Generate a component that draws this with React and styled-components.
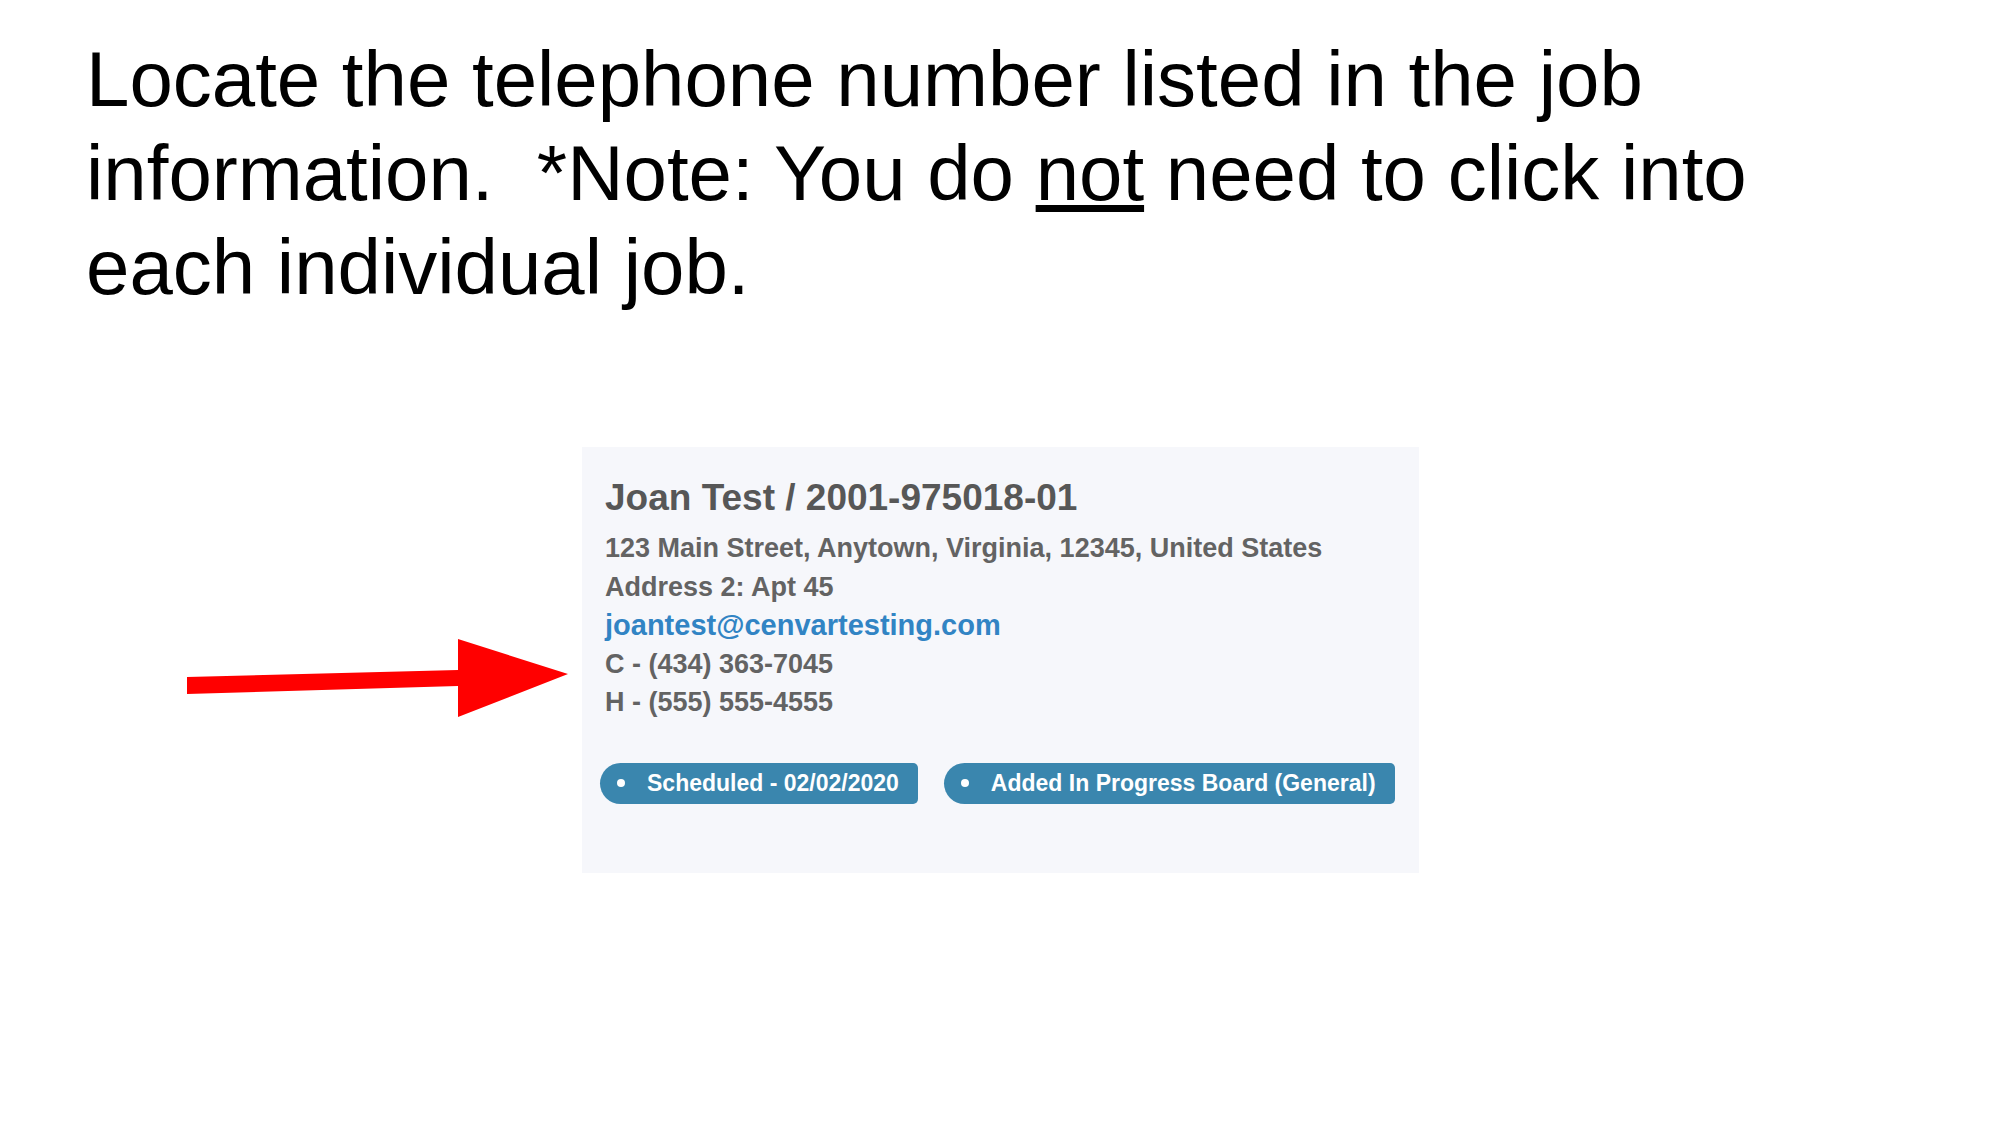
import React from 'react';
import styled, { createGlobalStyle } from 'styled-components';

const GlobalStyle = createGlobalStyle`
  html, body {
    margin: 0;
    padding: 0;
    background: #fff;
  }
  body {
    font-family: "Liberation Sans", Arial, sans-serif;
  }
`;

const Page = styled.div`
  width: 2000px;
  height: 1125px;
  box-sizing: border-box;
  padding-top: 32px;
  overflow: hidden;
`;

const Heading = styled.p`
  margin: 0 0 0 86px;
  font-size: 78px;
  line-height: 94px;
  color: #000;
`;

const Underlined = styled.span`
  text-decoration: underline;
  text-decoration-thickness: 7px;
  text-underline-offset: 5px;
`;

const Row = styled.div`
  display: flex;
  align-items: flex-start;
  gap: 14px;
  margin-top: 133px;
  padding-left: 187px;
`;

const Arrow = styled.svg`
  flex: none;
  margin-top: 192px;
`;

const Card = styled.div`
  width: 837px;
  height: 426px;
  box-sizing: border-box;
  background: #f6f7fb;
  padding: 29px 0 0 23px;
`;

const Title = styled.div`
  font-size: 37px;
  line-height: 44px;
  font-weight: bold;
  color: #575757;
`;

const Details = styled.div`
  margin-top: 9px;
`;

const Line = styled.div`
  font-size: ${p => (p.$email ? '29px' : '27px')};
  line-height: 38.5px;
  font-weight: bold;
  color: ${p => (p.$email ? '#3184c4' : '#636363')};
`;

const Badges = styled.div`
  display: flex;
  gap: 26px;
  margin: 41px 0 0 -5px;
`;

const Badge = styled.div`
  height: 41px;
  box-sizing: border-box;
  display: flex;
  align-items: center;
  background: #3a86ae;
  border-radius: 21px 5px 5px 21px;
  padding: 0 19px 0 17px;
`;

const Dot = styled.span`
  flex: none;
  width: 8px;
  height: 8px;
  border-radius: 50%;
  background: #fff;
  margin-right: 22px;
`;

const BadgeText = styled.span`
  white-space: nowrap;
  font-size: 23px;
  font-weight: bold;
  color: #fff;
`;

const badges = ['Scheduled - 02/02/2020', 'Added In Progress Board (General)'];

export default function App() {
  return (
    <Page>
      <GlobalStyle />
      <Heading>
        Locate the telephone number listed in the job
        <br />
        {'information.\u00a0 *Note: You do '}
        <Underlined>not</Underlined>
        {' need to click into'}
        <br />
        each individual job.
      </Heading>
      <Row>
        <Arrow width="381" height="78" viewBox="0 0 381 78">
          <polygon
            points="0,38 271,31 271,0 381,35 271,78 271,47 0,55"
            fill="#ff0000"
          />
        </Arrow>
        <Card>
          <Title>Joan Test / 2001-975018-01</Title>
          <Details>
            <Line>123 Main Street, Anytown, Virginia, 12345, United States</Line>
            <Line>Address 2: Apt 45</Line>
            <Line $email>joantest@cenvartesting.com</Line>
            <Line>C - (434) 363-7045</Line>
            <Line>H - (555) 555-4555</Line>
          </Details>
          <Badges>
            {badges.map(text => (
              <Badge key={text}>
                <Dot />
                <BadgeText>{text}</BadgeText>
              </Badge>
            ))}
          </Badges>
        </Card>
      </Row>
    </Page>
  );
}
